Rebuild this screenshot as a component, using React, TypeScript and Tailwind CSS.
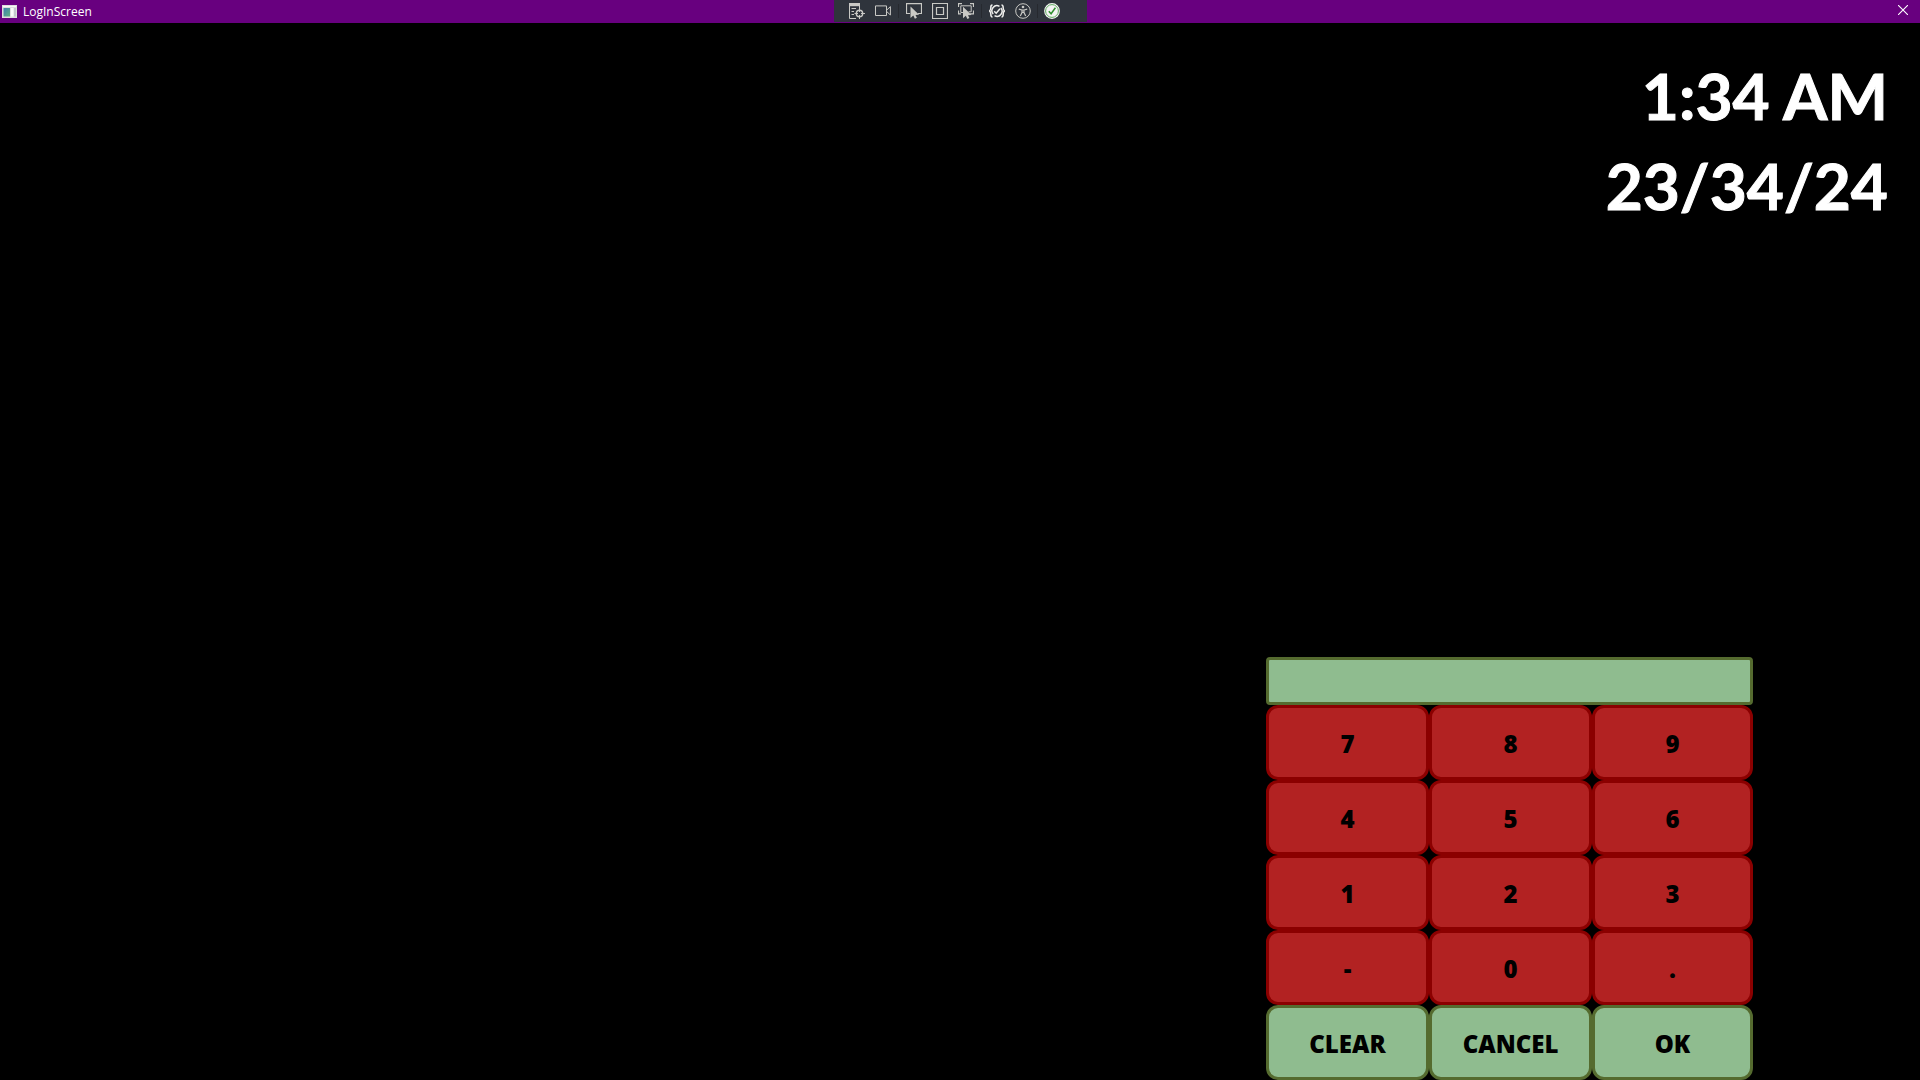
import type { ReactNode } from "react";

function Glyph({ children }: { children: ReactNode }) {
  return (
    <svg viewBox="0 0 16 16" className="size-4" fill="none" stroke="#c9c9c5" strokeWidth="1" aria-hidden="true">
      {children}
    </svg>
  );
}

function Tool({ label, children }: { label: string; children: ReactNode }) {
  return (
    <button type="button" aria-label={label} className="size-4">
      <Glyph>{children}</Glyph>
    </button>
  );
}

const cursorPath = "M0 0 L0 11.5 L2.8 8.9 L4.4 12.2 L6.4 11.2 L5 8.4 L8.6 8.2 Z";

function DebugToolbar() {
  return (
    <div role="toolbar" aria-label="Debug tools" className="flex h-[22px] items-center bg-[#2f343c] pr-[27px] pl-[15px]">
      <div className="flex gap-2.5">
        <Tool label="Live visual tree">
          <path d="M0 0H11V3.2H0Z" fill="#c9c9c5" stroke="none" />
          <path d="M.5 3V15.5H7M10.5 3V5" />
          <path d="M2.5 5.5H7M2.5 8.5H5M2.5 11.5H5" />
          <circle cx="10.5" cy="10.5" r="3.2" strokeWidth="1.4" />
          <path d="M10.5 5V9M10.5 12V16M5.5 10.5H9M12 10.5H16" />
        </Tool>
        <Tool label="Record">
          <path d="M.5 2.9H11.5V12.5H.5Z" />
          <path d="M12 6.8 L15.4 3.6 V12 L12 8.8" />
        </Tool>
      </div>
      <span className="mx-[7px] h-3.5 w-px bg-[#26292f]" />
      <div className="flex gap-2.5">
        <Tool label="Select element">
          <path d="M4 10.5H.5V.6H15.5V10.5H12" strokeWidth="1.2" />
          <path d={cursorPath} transform="translate(4.5 3.6)" fill="#c9c9c5" stroke="none" />
        </Tool>
        <Tool label="Display layout adorners">
          <path d="M.5 .5H15.5V15.5H.5Z" strokeWidth="1.2" />
          <path d="M4.5 4.5H11.5V11.5H4.5Z" strokeWidth="1.2" />
        </Tool>
        <Tool label="Track focused element">
          <path d="M.5 4V.6H4M12 .6H15.5V4M.5 7.5V10.8H3M12 10.8H15.5V7.5" strokeWidth="1.2" />
          <path d="M5 9.5H2.8V2.8H13.2V8.8H10.5" />
          <path d={cursorPath} transform="translate(5 3.8)" fill="#c9c9c5" stroke="none" />
        </Tool>
      </div>
      <span className="mx-[7px] h-3.5 w-px bg-[#26292f]" />
      <div className="flex gap-2.5">
        <Tool label="Binding failures">
          <g stroke="#eeeeec" strokeWidth="1.5">
            <path d="M3.5 2C1.8 2 1.8 3 1.8 5S1.6 7.6 .4 8C1.6 8.4 1.8 9 1.8 11S1.8 14 3.5 14" />
            <path d="M12.5 2C14.2 2 14.2 3 14.2 5S14.4 7.6 15.6 8C14.4 8.4 14.2 9 14.2 11S14.2 14 12.5 14" />
            <path d="M10.5 3.4A5 5 0 0 0 4.2 11M5.5 12.6A5 5 0 0 0 11.8 5" />
            <path d="M5.2 8.2 L7.2 10.2 L11 5.8" />
          </g>
        </Tool>
        <Tool label="Scan for accessibility issues">
          <circle cx="8" cy="8" r="7.3" />
          <circle cx="8" cy="4" r="1.3" fill="#c9c9c5" stroke="none" />
          <path d="M3.8 6.2 L7 7H9L12.2 6.2M7 7V9.5L5.3 13M9 7V9.5L10.7 13M7 9.3H9" strokeWidth="1.2" />
        </Tool>
      </div>
      <span className="mx-1.5 h-3.5 w-px bg-[#26292f]" />
      <Tool label="Hot reload">
        <circle cx="8" cy="8" r="7.9" fill="#f4f4f4" stroke="none" />
        <circle cx="8" cy="8" r="6.4" stroke="#5faa5f" />
        <path d="M4.8 8.2 L7.1 10.8 L11.4 4.8" stroke="#2f8f2f" strokeWidth="1.5" />
      </Tool>
    </div>
  );
}

function TitleBar() {
  return (
    <header className="grid h-[23px] grid-cols-[1fr_auto_1fr] items-start bg-[#68007f]">
      <div className="flex h-[22px] items-center gap-1.5 pl-0.5">
        <svg viewBox="0 0 15 13" className="h-[13px] w-[15px]" aria-hidden="true">
          <defs>
            <linearGradient id="pane" x1="0" y1="0" x2="1" y2="1">
              <stop offset="0" stopColor="#3d7fb0" />
              <stop offset="1" stopColor="#5fb183" />
            </linearGradient>
          </defs>
          <path d="M0 0H15V13H0Z" fill="#dedede" />
          <path d="M1 1H14V2H1Z" fill="#f8f8f8" />
          <path d="M1.5 3H8V11.5H1.5Z" fill="url(#pane)" />
          <path d="M9 3H11.5V11.5H9Z" fill="#fafafa" />
          <path d="M12 3H14V11.5H12Z" fill="#c4c8cc" />
        </svg>
        <h1 className="pt-0.5 font-['Open_Sans',sans-serif] text-xs leading-[22px] text-white">LogInScreen</h1>
      </div>
      <DebugToolbar />
      <button type="button" aria-label="Close" className="mr-3 grid h-5 place-items-center justify-self-end">
        <svg viewBox="0 0 10 10" className="size-2.5" stroke="#fff" strokeWidth="1.1" aria-hidden="true">
          <path d="M0 0L10 10M10 0L0 10" />
        </svg>
      </button>
    </header>
  );
}

const digits = ["7", "8", "9", "4", "5", "6", "1", "2", "3", "-", "0", "."];
const actions = ["CLEAR", "CANCEL", "OK"];

function Keypad() {
  return (
    <form
      onSubmit={(e) => e.preventDefault()}
      className="mt-auto mr-[167px] grid w-[487px] grid-cols-[163fr_163fr_161fr] self-end font-['Open_Sans',sans-serif] text-2xl font-extrabold text-black"
    >
      <input
        type="password"
        aria-label="Pass code"
        className="col-span-3 h-12 rounded border-3 border-[#556b2f] bg-[#8fbc8f] px-2 outline-none"
      />
      {digits.map((d) => (
        <button key={d} type="button" className="h-[75px] rounded-xl border-3 border-[#8b0000] bg-[#b22222] pt-0.5">
          {d}
        </button>
      ))}
      {actions.map((a) => (
        <button key={a} type="button" className="h-[75px] rounded-xl border-3 border-[#556b2f] bg-[#8fbc8f] pt-0.5">
          {a}
        </button>
      ))}
    </form>
  );
}

export default function App() {
  return (
    <div className="flex min-h-screen flex-col bg-black">
      <TitleBar />
      <main className="flex flex-1 flex-col">
        <div className="pt-7 pr-8 text-right font-['Comic_Sans_MS','Lato',sans-serif] text-[64px] leading-[90px] font-bold text-white [-webkit-text-stroke:1px_white]">
          <p>1:34 AM</p>
          <p>23/34/24</p>
        </div>
        <Keypad />
      </main>
    </div>
  );
}
